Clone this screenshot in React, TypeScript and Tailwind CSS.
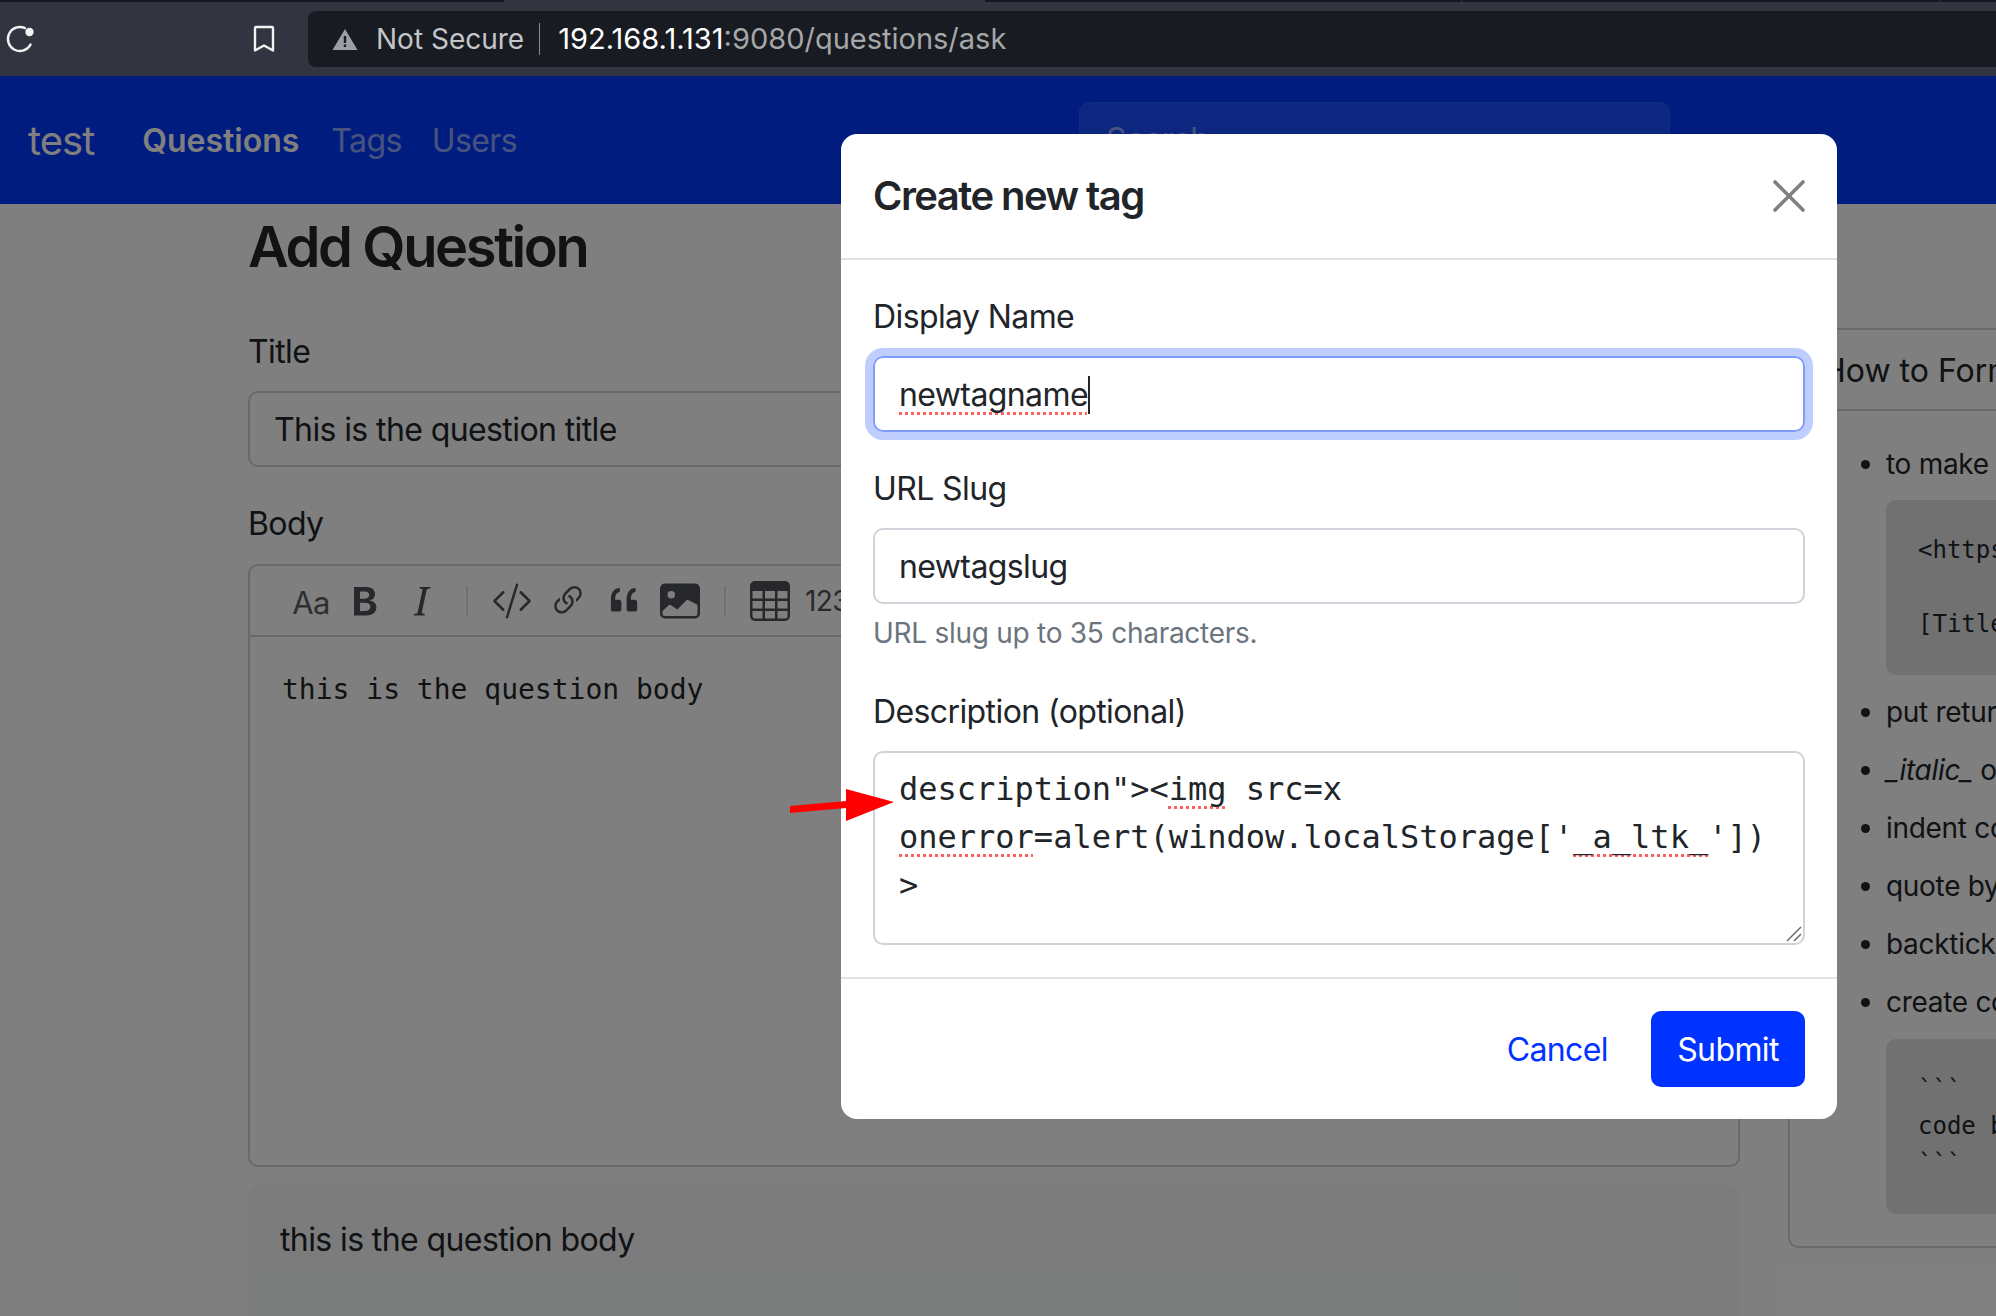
import { BsTypeBold, BsTypeItalic, BsCodeSlash, BsLink45Deg, BsQuote, BsImageFill, BsTable } from "react-icons/bs";

const sans = "font-['Inter','Liberation_Sans',sans-serif]";

function BrowserBar() {
  return (
    <div className="bg-[#32353f] h-[76px] flex flex-col tracking-normal">
      <div className="h-[2px] flex">
        <div className="w-[504px] bg-[#16181f]" />
        <div className="w-[481px]" />
        <div className="w-[476px] bg-[#16181f]" />
        <div className="w-[1px]" />
        <div className="w-[477px] bg-[#16181f]" />
        <div className="w-[1px]" />
        <div className="flex-1 bg-[#16181f]" />
      </div>
      <div className="flex-1 flex items-center">
        <svg width="30" height="30" viewBox="0 0 30 30" className="ml-[5px] text-[#f2f2f3]">
          <path d="M25.6 20.5 A12 12 0 1 1 20 4.1" fill="none" stroke="currentColor" strokeWidth="2.4" strokeLinecap="round" />
          <circle cx="24.5" cy="8" r="4.2" fill="currentColor" />
        </svg>
        <svg width="24" height="30" viewBox="0 0 24 30" className="ml-[217px] text-[#f2f2f3]">
          <path d="M3 4 Q3 3 4 3 H20 Q21 3 21 4 V26.5 L12 21.5 L3 26.5 Z" fill="none" stroke="currentColor" strokeWidth="2.4" strokeLinejoin="round" />
        </svg>
        <div className="ml-[32px] flex-1 h-[56px] bg-[#181b22] rounded-l-[8px] flex items-center pl-[24px] text-[28px] text-[#a6a7a9]">
          <svg width="26" height="24" viewBox="0 0 26 24" className="text-[#9c9ea5]">
            <path fill="currentColor" fillRule="evenodd" d="M13 2 L25.5 23 H0.5 Z M11.8 9 v7 h2.4 v-7 Z M11.8 17.5 v2.6 h2.4 v-2.6 Z" />
          </svg>
          <span className="ml-[18px] text-[#c4c5c7]">Not Secure</span>
          <div className="ml-[15px] w-[1px] h-[32px] bg-[#8a8b8f]" />
          <span className="ml-[18px] text-white text-[29px]">192.168.1.131</span>
          <span className="text-[29px]">:9080/questions/ask</span>
        </div>
      </div>
    </div>
  );
}

function Nav() {
  return (
    <div className="h-[128px] bg-[#0038ff] flex items-center pt-[2px]">
      <span className="ml-[28px] text-[40px] tracking-[-1px] text-white">test</span>
      <span className="ml-[48px] text-[32px] font-semibold tracking-normal text-white">Questions</span>
      <span className="ml-[32px] text-[32px] text-white/55">Tags</span>
      <span className="ml-[30px] text-[32px] text-white/55">Users</span>
      <div className="ml-[562px] w-[591px] h-[76px] mb-[3px] rounded-[10px] bg-white/10 border border-white/5 flex items-center pl-[26px] text-[32px] text-white/50">
        Search
      </div>
    </div>
  );
}

function ToolIcon({ children }: { children: React.ReactNode }) {
  return <div className="w-[56px] flex justify-center items-center text-[#4c5157]">{children}</div>;
}

function Sep() {
  return (
    <div className="w-[34px] flex justify-center">
      <div className="w-[2px] h-[30px] bg-[#dee2e6]" />
    </div>
  );
}

function LeftColumn() {
  return (
    <div className="w-[1492px] flex-none pt-[10px]">
      <h1 className="text-[56px] leading-[67px] font-semibold tracking-[-2.4px] text-[#212529]">Add Question</h1>
      <div className="mt-[47px] text-[32px] leading-[48px] text-[#212529]">Title</div>
      <div className="mt-[15px] h-[76px] border-2 border-[#ced4da] rounded-[10px] pl-[24px] pt-[2px] flex items-center text-[32px] text-[#212529]">
        This is the question title
      </div>
      <div className="mt-[33px] text-[32px] leading-[48px] text-[#212529]">Body</div>
      <div className="mt-[16px] h-[603px] border-2 border-[#ced4da] rounded-[10px]">
        <div className="h-[71px] border-b-2 border-[#ced4da] flex items-center pl-[32px]">
          <ToolIcon><span className="text-[31px] text-[#5a5f64] mt-[5px] ml-[2px]">Aa</span></ToolIcon>
          <ToolIcon><BsTypeBold size={46} /></ToolIcon>
          <ToolIcon><BsTypeItalic size={46} /></ToolIcon>
          <Sep />
          <ToolIcon><BsCodeSlash size={40} /></ToolIcon>
          <ToolIcon><BsLink45Deg size={40} /></ToolIcon>
          <ToolIcon><BsQuote size={42} /></ToolIcon>
          <ToolIcon><BsImageFill size={40} /></ToolIcon>
          <Sep />
          <ToolIcon><BsTable size={40} /></ToolIcon>
          <span className="text-[28px] text-[#4c5157] ml-[7px]">123</span>
        </div>
        <div className="pl-[32px] pt-[32px] font-['DejaVu_Sans_Mono',monospace] tracking-normal text-[28px] leading-[42px] text-[#212529]">
          this is the question body
        </div>
      </div>
      <div className="mt-[18px] h-[300px] bg-[#f8f9fa] rounded-[10px] pl-[32px] pt-[31px] text-[32px] leading-[48px] text-[#212529]">
        this is the question body
      </div>
    </div>
  );
}

function CodeBlock({ lines, className }: { lines: string[]; className: string }) {
  return (
    <pre className={`${className} mb-[16px] w-[400px] bg-[#e2e3e5] rounded-[10px] px-[32px] py-[32px] font-['DejaVu_Sans_Mono',monospace] tracking-normal text-[24px] leading-[37px] text-[#212529] whitespace-pre`}>
      {lines.join("\n")}
    </pre>
  );
}

function RightColumn() {
  const li = "mb-[16px] whitespace-nowrap";
  return (
    <div className="w-[700px] flex-none ml-[48px] pt-[124px]">
      <div className="border-2 border-[#ced4da] rounded-[10px] h-[920px] text-[#212529]">
        <div className="h-[81px] border-b-2 border-[#ced4da] pl-[32px] pt-[2px] flex items-center text-[32px] tracking-normal whitespace-nowrap">
          How to Format
        </div>
        <ul className="list-disc pl-[96px] pt-[32px] text-[28px] leading-[42px] tracking-[-0.3px]">
          <li className="whitespace-nowrap">to make links</li>
          <CodeBlock className="mt-[15px]" lines={["<https://example.com>", "", "[Title](https://example.com)"]} />
          <li className={li}>put returns between paragraphs</li>
          <li className={li}><em>_italic_</em> or **bold**</li>
          <li className={li}>indent code by 4 spaces</li>
          <li className={li}>quote by placing &gt; at start of line</li>
          <li className={li}>backtick escapes `like _so_`</li>
          <li className="whitespace-nowrap">create code fences with backticks</li>
          <CodeBlock className="mt-[16px]" lines={["```", "code block", "```"]} />
        </ul>
      </div>
    </div>
  );
}

const spell = "underline decoration-dotted decoration-[#ff5f5f] decoration-[3px] underline-offset-[6px] [text-decoration-skip-ink:none]";

function Modal() {
  return (
    <div className="w-[996px] ml-[841px] mt-[58px] bg-white rounded-[16px] text-[#212529] relative">
      <div className="h-[126px] border-b-2 border-[#dee2e6] flex items-center justify-between pl-[32px] pr-[32px]">
        <span className="text-[40px] font-semibold tracking-[-1.55px]">Create new tag</span>
        <svg width="32" height="32" viewBox="0 0 32 32" className="mb-[1px]">
          <path d="M2 2 L30 30 M30 2 L2 30" stroke="#7f7f7f" strokeWidth="3.6" strokeLinecap="round" />
        </svg>
      </div>
      <div className="px-[32px] pt-[33px] h-[719px] border-b-2 border-[#dee2e6]">
        <div className="text-[32px] leading-[48px]">Display Name</div>
        <div className="mt-[15px] h-[76px] border-2 border-[#809bff] rounded-[10px] shadow-[0_0_0_8px_#bfcdff] pl-[24px] pt-[2px] flex items-center text-[32px]">
          <span className={spell}>newtagname</span>
          <span className="w-[2px] h-[38px] bg-[#212529]" />
        </div>
        <div className="mt-[33px] text-[32px] leading-[48px]">URL Slug</div>
        <div className="mt-[15px] h-[76px] border-2 border-[#ced4da] rounded-[10px] pl-[24px] pt-[2px] flex items-center text-[32px]">
          newtagslug
        </div>
        <div className="mt-[8px] text-[28px] leading-[42px] tracking-[-0.27px] text-[#6c757d]">URL slug up to 35 characters.</div>
        <div className="mt-[34px] text-[32px] leading-[48px]">Description (optional)</div>
        <div className="mt-[15px] h-[194px] border-2 border-[#ced4da] rounded-[10px] pl-[24px] pt-[12px] font-['DejaVu_Sans_Mono',monospace] tracking-normal text-[32px] leading-[48px] relative">
          <div>description"&gt;&lt;<span className={spell}>img</span> src=x</div>
          <div>
            <span className={spell}>onerror</span>=alert(window.localStorage['<span className={spell}>_a_ltk_</span>'])
          </div>
          <div>&gt;</div>
          <svg width="16" height="16" viewBox="0 0 16 16" className="absolute right-[1px] bottom-[1px]">
            <path d="M1 15 L15 1 M8 15 L15 8" stroke="#6b6b6b" strokeWidth="1.5" />
          </svg>
        </div>
      </div>
      <div className="h-[140px] flex items-center justify-end pr-[32px]">
        <span className="text-[32px] text-[#0033ff] mr-[43px] pt-[2px]">Cancel</span>
        <div className="w-[154px] h-[76px] rounded-[10px] bg-[#0033ff] text-white text-[32px] pt-[2px] flex items-center justify-center">
          Submit
        </div>
      </div>
      <svg width="120" height="50" viewBox="0 0 120 50" className="absolute left-[-55px] top-[650px]">
        <path d="M4 22 L60 17 L60 24 L4 29 Z" fill="#ff0000" />
        <path d="M60 5 L108 18 L60 37 Z" fill="#ff0000" />
      </svg>
    </div>
  );
}

export default function App() {
  return (
    <div className={`w-[1996px] h-[1316px] overflow-hidden bg-white tracking-[-0.6px] ${sans}`}>
      <BrowserBar />
      <div className="relative h-[1240px] overflow-hidden">
        <Nav />
        <div className="flex pl-[248px]">
          <LeftColumn />
          <RightColumn />
        </div>
        <div className="absolute inset-0 bg-black/50">
          <Modal />
        </div>
      </div>
    </div>
  );
}
